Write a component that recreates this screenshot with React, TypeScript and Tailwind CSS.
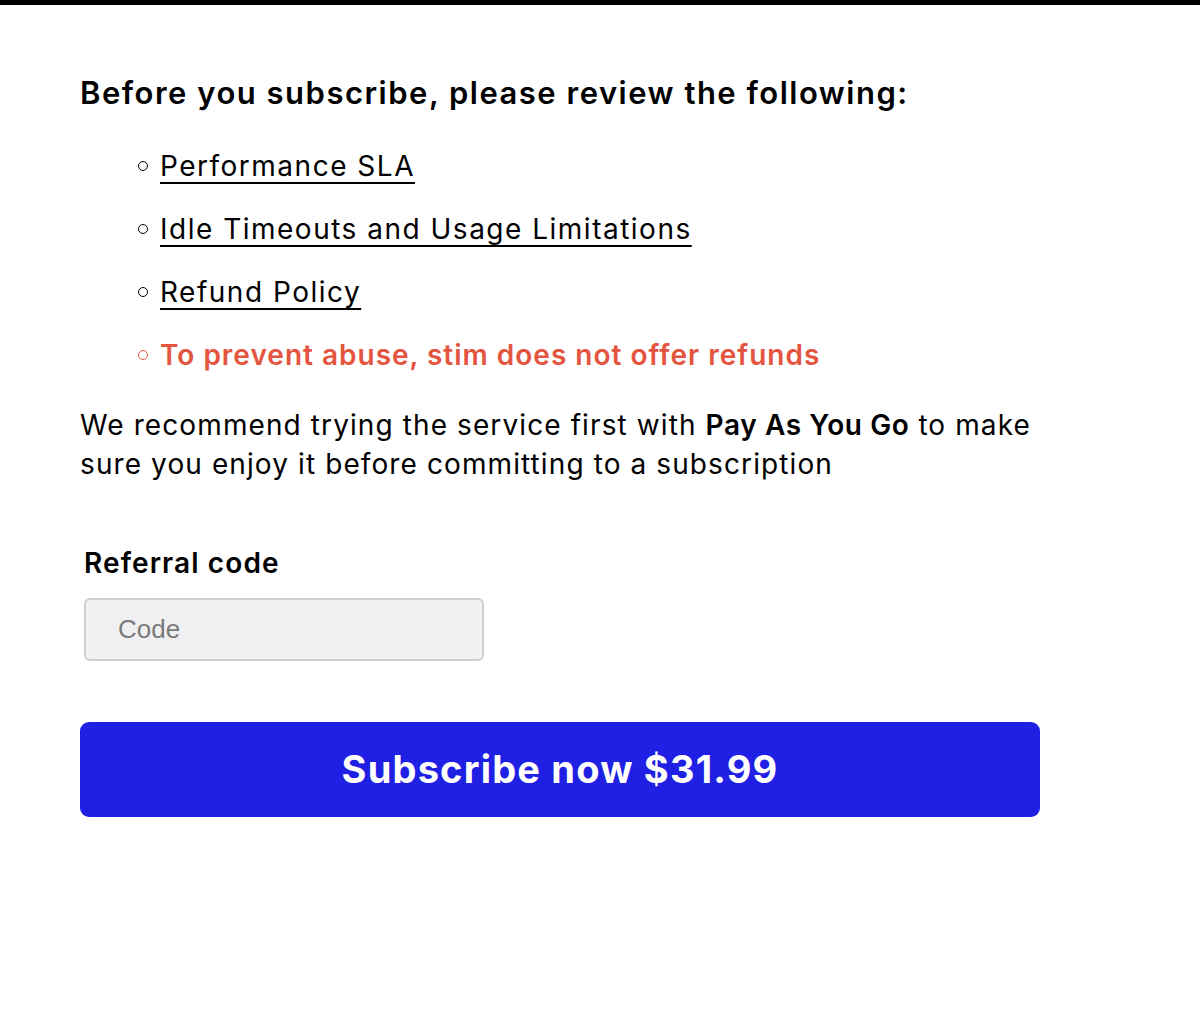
import React from "react";

const links = [
  "Performance SLA",
  "Idle Timeouts and Usage Limitations",
  "Refund Policy",
];

const App = () => {
  return (
    <div className="min-h-[1030px] w-full bg-white font-['Inter','Noto_Sans',sans-serif] text-black">
      <div className="h-[5px] w-full bg-black" />
      <div className="w-[960px] ml-[80px] pt-[66px]">
        <h2 className="text-[31px] font-semibold leading-[44px] tracking-[1.5px]">
          Before you subscribe, please review the following:
        </h2>
        <ul className="mt-[31px] ml-[80px] flex flex-col gap-[23px] text-[28px] leading-[40px] tracking-[1.5px]">
          {links.map((l) => (
            <li key={l} className="flex items-center">
              <span className="w-[10px] h-[10px] rounded-full border border-black mr-[12px] -ml-[22px]" />
              <a href="#" className="underline underline-offset-[6px] decoration-[2px]">
                {l}
              </a>
            </li>
          ))}
          <li className="flex items-center text-[#e4553f] font-semibold tracking-[1px]">
            <span className="w-[10px] h-[10px] rounded-full border border-[#e4553f] mr-[12px] -ml-[22px]" />
            To prevent abuse, stim does not offer refunds
          </li>
        </ul>
        <p className="mt-[31px] text-[28px] leading-[39px] tracking-[1.1px]">
          We recommend trying the service first with{" "}
          <span className="font-semibold tracking-[0.6px]">Pay As You Go</span> to make sure you
          enjoy it before committing to a subscription
        </p>
        <div className="mt-[59px] ml-[4px]">
          <label className="block text-[28px] font-semibold leading-[40px] tracking-[1.1px]">
            Referral code
          </label>
          <input
            placeholder="Code"
            className="mt-[15px] w-[400px] h-[63px] rounded-[6px] border-2 border-[#cfcfcf] bg-[#f0f0f2] px-[32px] text-[26px] font-['Liberation_Sans',sans-serif] placeholder:text-[#7a7a7a] outline-none"
          />
        </div>
        <button className="mt-[61px] w-[960px] h-[95px] rounded-[9px] bg-[#2020e4] text-white text-[38px] font-bold tracking-[1.2px]">
          Subscribe now $31.99
        </button>
      </div>
    </div>
  );
};

export default App;
